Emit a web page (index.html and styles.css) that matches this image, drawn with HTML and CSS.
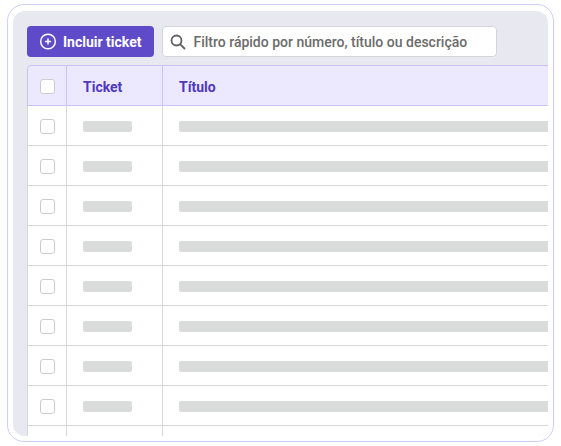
FILE: index.html
```html
<!DOCTYPE html>
<html lang="pt-BR">
<head>
    <meta charset="UTF-8">
    <meta name="viewport" content="width=device-width, initial-scale=1.0">
    <title>Tickets</title>
    <link rel="stylesheet" href="styles.css">
</head>
<body>
    <div class="frame">
        <main class="panel">
            <div class="toolbar">
                <button type="button" class="btn-add">
                    <svg width="18" height="18" viewBox="0 0 18 18" fill="none" stroke="currentColor" stroke-width="1.5" stroke-linecap="round" aria-hidden="true">
                        <circle cx="9" cy="8.5" r="7.3"/>
                        <path d="M9 6v5M6.5 8.5h5"/>
                    </svg>
                    Incluir ticket
                </button>
                <label class="search">
                    <svg width="16" height="16" viewBox="0 0 16 16" fill="none" stroke="currentColor" stroke-width="1.8" stroke-linecap="round" aria-hidden="true">
                        <circle cx="6.5" cy="6.5" r="5"/>
                        <path d="M10.3 10.3L14.5 14.5"/>
                    </svg>
                    <input type="text" placeholder="Filtro rápido por número, título ou descrição" aria-label="Filtro rápido">
                </label>
            </div>
            <table class="tickets">
                <thead>
                    <tr>
                        <th class="col-check"><input type="checkbox" aria-label="Selecionar todos"></th>
                        <th class="col-ticket">Ticket</th>
                        <th>Título</th>
                    </tr>
                </thead>
                <tbody id="rows"></tbody>
            </table>
        </main>
    </div>

    <script>
        const total = 9;
        let html = "";
        for (let i = 1; i <= total; i++) {
            html += `<tr>
                <td class="col-check"><input type="checkbox" aria-label="Selecionar linha ${i}"></td>
                <td class="col-ticket"><div class="bar bar-short"></div></td>
                <td class="col-title"><div class="bar"></div></td>
            </tr>`;
        }
        document.getElementById("rows").innerHTML = html;
    </script>
</body>
</html>
```
FILE: styles.css
```css
* {
    box-sizing: border-box;
}

body {
    margin: 0;
    padding: 4px 7px;
    height: 100vh;
    background: #ffffff;
    font-family: Roboto, sans-serif;
    font-size: 14px;
}

.frame {
    height: 100%;
    padding: 6px 5px 5px;
    border: 1px solid #cfcdfb;
    border-radius: 17px;
}

.panel {
    height: 100%;
    padding: 15px 0 0 14px;
    background: #e8e8f1;
    border-radius: 12px;
    overflow: hidden;
}

.toolbar {
    display: flex;
    gap: 8px;
    padding-right: 51px;
    margin-bottom: 8px;
}

.btn-add {
    display: flex;
    align-items: center;
    gap: 6px;
    height: 31px;
    padding: 0 13px 0 12px;
    border: none;
    border-radius: 4px;
    background: #5f4bc9;
    color: #ffffff;
    font: inherit;
    font-weight: 700;
    white-space: nowrap;
    cursor: pointer;
}

.search {
    flex: 1;
    display: flex;
    align-items: center;
    gap: 7px;
    height: 31px;
    padding: 0 7px;
    border: 1px solid #d5d5d6;
    border-radius: 4px;
    background: #ffffff;
    color: #616161;
}

.search svg {
    flex: none;
}

.search input {
    flex: 1;
    min-width: 0;
    padding: 0;
    border: none;
    outline: none;
    background: none;
    color: inherit;
    font: inherit;
    font-weight: 500;
}

.search input::placeholder {
    color: #6b6b6b;
    opacity: 1;
}

.tickets {
    width: 100%;
    table-layout: fixed;
    border-collapse: separate;
    border-spacing: 0;
}

.tickets th,
.tickets td {
    height: 40px;
    padding: 1px 0 0 16px;
    border-right: 1px solid #d5d6d7;
    border-bottom: 1px solid #d5d6d7;
    background: #ffffff;
    text-align: left;
}

.tickets th {
    height: 41px;
    padding-top: 2px;
    border-color: #c9c3f5;
    border-top: 1px solid #c9c3f5;
    background: #ece9ff;
    color: #4f38bd;
    font-weight: 700;
}

.tickets .col-check {
    width: 40px;
    padding-left: 0;
    border-left: 1px solid #d5d6d7;
}

.tickets th.col-check {
    border-left-color: #c9c3f5;
    border-top-left-radius: 4px;
}

.tickets .col-ticket {
    width: 96px;
}

.tickets th:last-child,
.tickets td:last-child {
    border-right: none;
}

.tickets input {
    appearance: none;
    display: block;
    width: 15px;
    height: 15px;
    margin: 0 auto;
    border: 1px solid #cccccc;
    border-radius: 3px;
    background: #ffffff;
}

.tickets input:checked {
    background: #5f4bc9;
}

.bar {
    height: 11px;
    border-radius: 2px 0 0 2px;
    background: #dadcdb;
}

.bar-short {
    width: 49px;
    border-radius: 2px;
}
```
